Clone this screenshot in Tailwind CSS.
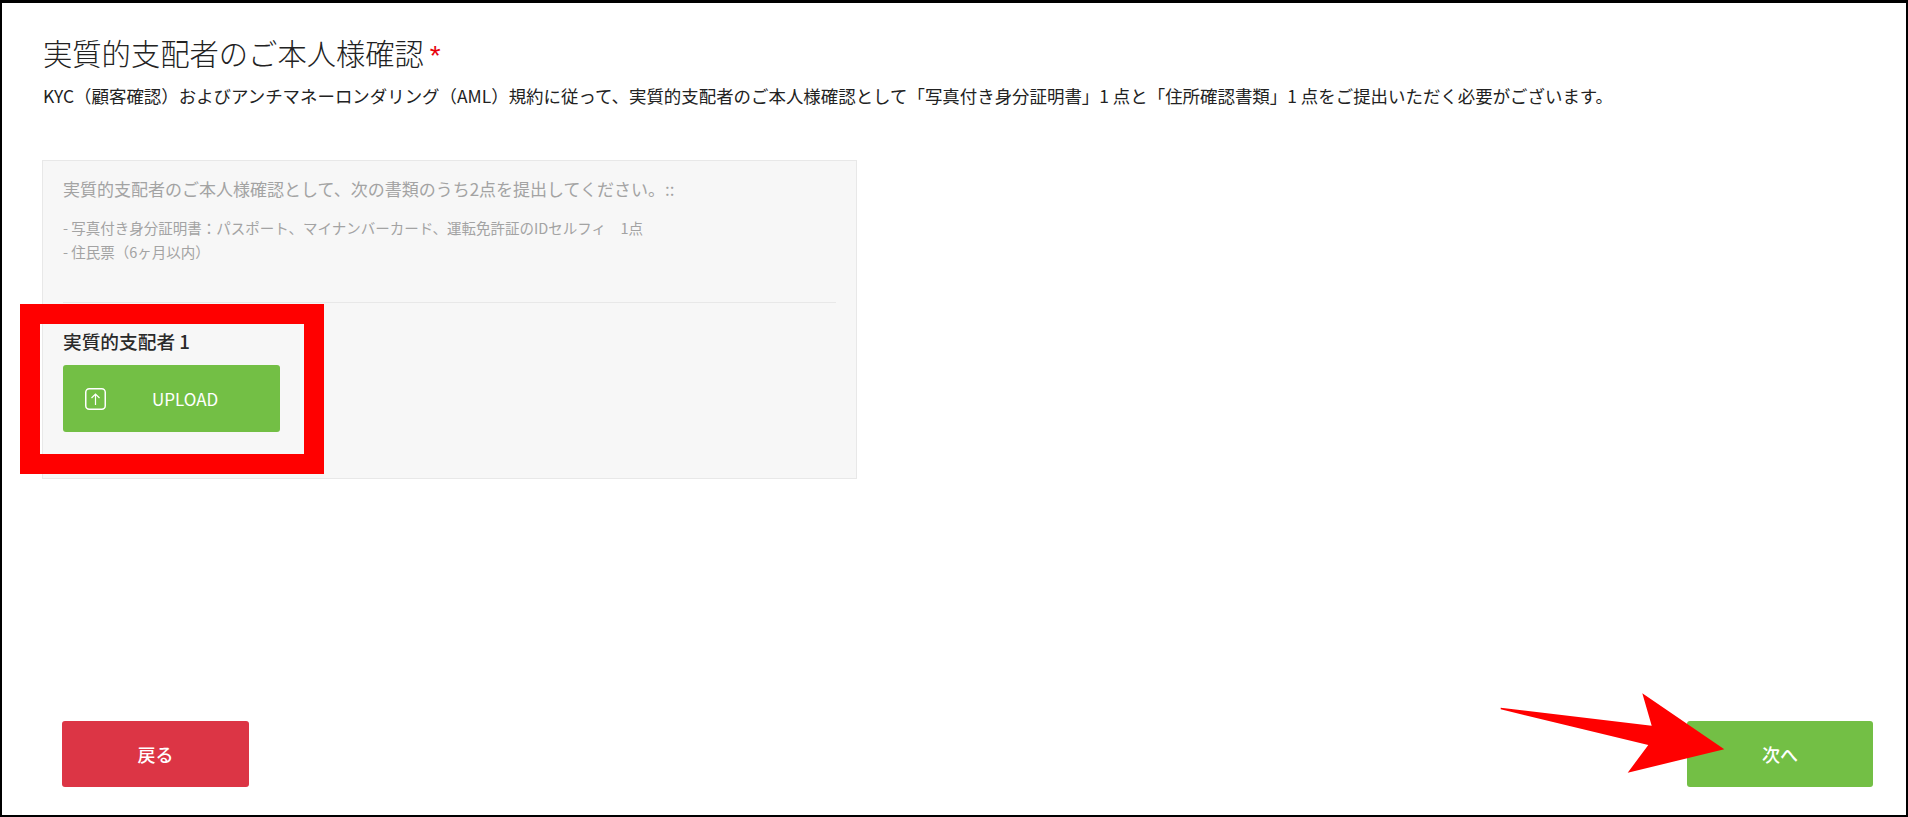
<!DOCTYPE html>
<html lang="ja">
<head>
    <meta charset="UTF-8">
    <title>実質的支配者のご本人様確認</title>
    <script src="https://cdn.jsdelivr.net/npm/@tailwindcss/browser@4"></script>
</head>
<body class="bg-white font-['Noto_Sans_CJK_JP','Noto_Sans',sans-serif]">

<div class="relative h-[817px] w-[1908px] border-2 border-t-[3px] border-black flex flex-col overflow-hidden">

    <!-- Heading -->
    <div class="pl-[41px] pt-[28px]">
        <h1 class="text-[29.3px] leading-[42px] font-light text-[#222] h-[42px]">実質的支配者のご本人様確認<span class="font-['Liberation_Sans',sans-serif] font-normal text-red-600 text-[28px] ml-[6px]">*</span></h1>
        <p class="mt-[1px] text-[17.45px] leading-[44px] text-[#222] whitespace-nowrap">KYC（顧客確認）およびアンチマネーロンダリング（AML）規約に従って、実質的支配者のご本人様確認として「写真付き身分証明書」1 点と「住所確認書類」1 点をご提出いただく必要がございます。</p>
    </div>

    <!-- Panel -->
    <div class="ml-[40px] mt-[42px] w-[815px] h-[319px] bg-[#f7f7f7] border border-[#e8e8e8] px-[20px] pt-[15px]">
        <p class="text-[17px] leading-[26px] text-[#a3a3a3] whitespace-nowrap">実質的支配者のご本人様確認として、次の書類のうち2点を提出してください。::</p>
        <div class="mt-[14px] text-[14.5px] leading-[24px] text-[#a3a3a3] whitespace-nowrap">
            <p>- 写真付き身分証明書：パスポート、マイナンバーカード、運転免許証のIDセルフィ　1点</p>
            <p>- 住民票（6ヶ月以内）</p>
        </div>
        <div class="mt-[38px] border-t border-[#e8e8e8]"></div>
        <h2 class="mt-[25px] text-[18.7px] leading-[26px] font-medium text-[#2a2a2a]">実質的支配者 1</h2>
        <button class="mt-[11px] w-[217px] h-[67px] bg-[#73bf45] rounded-[3px] flex items-center pl-[22px] text-white">
            <svg class="w-[21px] h-[22px]" viewBox="0 0 21 22" fill="none" stroke="white">
                <rect x="0.75" y="0.75" width="19.5" height="20.5" rx="3.5" stroke-width="1.5"/>
                <path d="M10.5 17V6M6.5 10l4-4 4 4" stroke-width="1.2"/>
            </svg>
            <span class="ml-[46px] text-[17px]">UPLOAD</span>
        </button>
    </div>

    <!-- Footer buttons -->
    <div class="mt-auto mb-[28px] pl-[60px] pr-[33px] flex justify-between">
        <button class="w-[187px] h-[66px] bg-[#dc3545] rounded-[3px] text-white text-[18px] font-medium">戻る</button>
        <button class="w-[186px] h-[66px] bg-[#73bf45] rounded-[3px] text-white text-[18px] font-medium">次へ</button>
    </div>

    <!-- Red annotation frame -->
    <div class="absolute left-[18px] top-[301px] w-[304px] h-[170px] border-[20px] border-[#ff0000]"></div>

    <!-- Red annotation arrow -->
    <svg class="absolute left-[1498px] top-[690px] w-[228px] h-[84px]" viewBox="1500 693 228 84">
        <polygon fill="#ff0000" points="1500.7,707.7 1651.7,725.7 1642.3,693.3 1724.3,749.3 1627.7,772.7 1648.3,745 1500.7,709.3"/>
    </svg>
</div>

</body>
</html>
